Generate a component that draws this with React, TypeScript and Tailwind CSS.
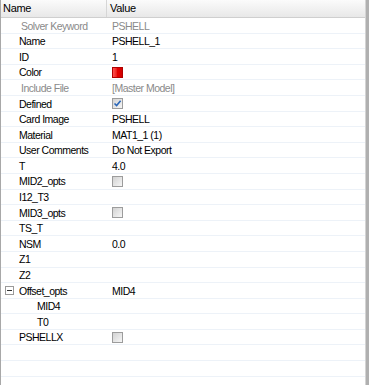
import React from "react";

type Row = {
  name: string;
  value?: string;
  kind?: "text" | "check" | "checked" | "color";
  muted?: boolean;
  indent?: number;
  toggle?: boolean;
};

const rows: Row[] = [
  { name: "Solver Keyword", value: "PSHELL", muted: true },
  { name: "Name", value: "PSHELL_1" },
  { name: "ID", value: "1" },
  { name: "Color", kind: "color" },
  { name: "Include File", value: "[Master Model]", muted: true },
  { name: "Defined", kind: "checked" },
  { name: "Card Image", value: "PSHELL" },
  { name: "Material", value: "MAT1_1 (1)" },
  { name: "User Comments", value: "Do Not Export" },
  { name: "T", value: "4.0" },
  { name: "MID2_opts", kind: "check" },
  { name: "I12_T3" },
  { name: "MID3_opts", kind: "check" },
  { name: "TS_T" },
  { name: "NSM", value: "0.0" },
  { name: "Z1" },
  { name: "Z2" },
  { name: "Offset_opts", value: "MID4", toggle: true },
  { name: "MID4", indent: 1 },
  { name: "T0", indent: 1 },
  { name: "PSHELLX", kind: "check" },
];

function CheckBox({ checked }: { checked?: boolean }) {
  return (
    <span className="relative block w-[11px] h-[11px] border border-[#9c9c9c] bg-gradient-to-br from-[#d2d2d2] to-[#f6f6f6]">
      {checked && (
        <svg viewBox="0 0 9 9" className="absolute left-0 top-0 w-[9px] h-[9px]">
          <path d="M1.5 4.5 L3.6 6.6 L7.6 1.8" fill="none" stroke="#2a66b8" strokeWidth="1.6" />
        </svg>
      )}
    </span>
  );
}

function ValueCell({ row }: { row: Row }) {
  if (row.kind === "check" || row.kind === "checked") {
    return <CheckBox checked={row.kind === "checked"} />;
  }
  if (row.kind === "color") {
    return (
      <span className="block w-[11px] h-[11px] border border-[#b00000] bg-gradient-to-r from-[#ff5050] via-[#e60000] to-[#d00000]" />
    );
  }
  return <span className={row.muted ? "text-[#8a8a8a]" : "text-black"}>{row.value}</span>;
}

export default function App() {
  const blanks = [0, 1, 2];

  return (
    <div
      className="w-[369px] h-[385px] overflow-hidden bg-white flex text-[10.5px] tracking-[-0.5px] leading-none"
      style={{ fontFamily: '"Liberation Sans", Arial, sans-serif' }}
    >
      <div className="flex-1 flex flex-col border-l border-[#a8a8a8] min-w-0">
        {/* header */}
        <div className="h-[18px] shrink-0 flex items-stretch bg-gradient-to-b from-[#fbfbfb] to-[#e8e8e8] border-b border-[#cfcfcf]">
          <div className="w-[106px] flex items-center pl-[2px] border-r border-[#d6d6d6] text-black text-[11px] tracking-[-0.3px]">
            Name
          </div>
          <div className="flex-1 flex items-center pl-[3px] text-black text-[11px] tracking-[-0.3px]">Value</div>
        </div>

        {rows.map((row) => (
          <div key={row.name + (row.indent ?? 0)} className="h-[15.6px] shrink-0 flex items-center border-b border-[#edf2f8]">
            <div className="w-[107px] h-full flex items-center relative">
              {row.toggle && (
                <span className="absolute left-[4px] top-[3px] w-[9px] h-[9px] border border-[#9a9a9a] bg-white flex items-center justify-center">
                  <span className="block w-[5px] h-px bg-[#333]" />
                </span>
              )}
              <span
                className={
                  "pt-px " +
                  (row.muted ? "text-[#8a8a8a] pl-[20px]" : "text-black pl-[18px]") +
                  (row.indent ? " !pl-[36px]" : "")
                }
              >
                {row.name}
              </span>
            </div>
            <div className="flex-1 pl-[4px] pt-px flex items-center">
              <ValueCell row={row} />
            </div>
          </div>
        ))}

        {blanks.map((b) => (
          <div key={b} className="h-[15.6px] shrink-0 border-b border-[#edf2f8]" />
        ))}
      </div>
      <div className="w-[4px] shrink-0 flex">
        <div className="w-px bg-[#d4d4d4]" />
        <div className="flex-1 bg-[#b0b0b0]" />
      </div>
    </div>
  );
}
